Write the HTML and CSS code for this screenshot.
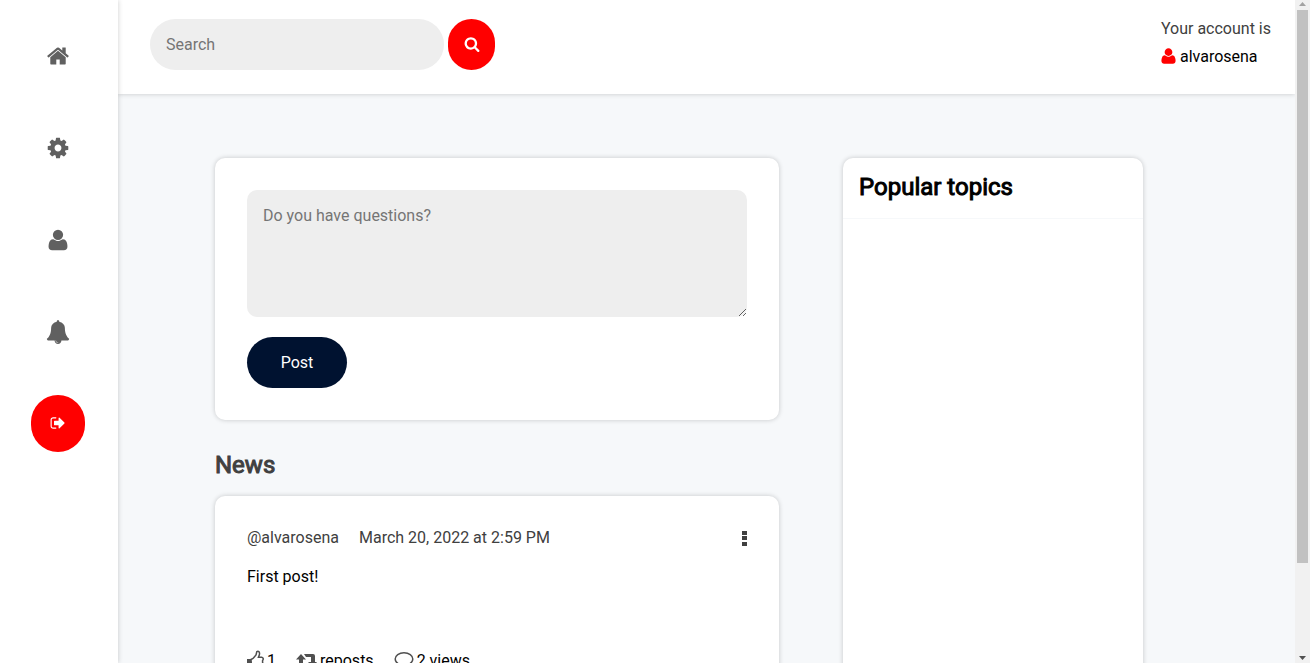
FILE: index.html
```html
<!DOCTYPE html>
<html lang="en">
<head>
<meta charset="utf-8">
<title>Home</title>
<meta name="viewport" content="width=device-width, initial-scale=1">
<link rel="stylesheet" href="styles.css">
</head>
<body>
<div class="app">
  <nav class="sidebar" aria-label="Main">
    <a class="nav-link" href="#" aria-label="Home"><svg class="icon-lg" viewBox="0 0 1792 1792"><path d="M1472 992v480q0 26-19 45t-45 19h-384v-384h-256v384h-384q-26 0-45-19t-19-45v-480q0-1 .5-3t.5-3l575-474 575 474q1 2 1 6zm223-69l-62 74q-8 9-21 11h-3q-13 0-21-7l-692-577-692 577q-12 8-24 7-13-2-21-11l-62-74q-8-10-7-23.500t11-21.500l719-599q32-26 76-26t76 26l244 204v-195q0-14 9-23t23-9h192q14 0 23 9t9 23v408l219 182q10 8 11 21.500t-7 23.500z"/></svg></a>
    <a class="nav-link" href="#" aria-label="Settings"><svg class="icon-lg" viewBox="0 0 1792 1792"><path d="M1152 896q0-106-75-181t-181-75-181 75-75 181 75 181 181 75 181-75 75-181zm512-109v222q0 12-8 23t-20 13l-185 28q-19 54-39 91 35 50 107 138 10 12 10 25t-9 23q-27 37-99 108t-94 71q-12 0-26-9l-138-108q-44 23-91 38-16 136-29 186-7 28-36 28h-222q-14 0-24.500-8.500t-11.500-21.500l-28-184q-49-16-90-37l-141 107q-10 9-25 9-14 0-25-11-126-114-165-168-7-10-7-23 0-12 8-23 15-21 51-66.500t54-70.500q-27-50-41-99l-183-27q-13-2-21-12.500t-8-23.500v-222q0-12 8-23t19-13l186-28q14-46 39-92-40-57-107-138-10-12-10-24 0-10 9-23 26-36 98.500-107.500t94.500-71.500q13 0 26 10l138 107q44-23 91-38 16-136 29-186 7-28 36-28h222q14 0 24.500 8.500t11.500 21.500l28 184q49 16 90 37l142-107q9-9 24-9 13 0 25 10 129 119 165 170 7 8 7 22 0 12-8 23-15 21-51 66.500t-54 70.500q26 50 41 98l183 28q13 2 21 12.500t8 23.500z"/></svg></a>
    <a class="nav-link" href="#" aria-label="Profile"><svg class="icon-lg" viewBox="0 0 1792 1792"><path d="M1600 1405q0 120-73 189.500t-194 69.500h-874q-121 0-194-69.500t-73-189.500q0-53 3.500-103.500t14-109 26.500-108.500 43-97.500 62-81 85.500-53.500 111.500-20q9 0 42 21.500t74.500 48 108 48 133.500 21.500 133.500-21.500 108-48 74.500-48 42-21.500q61 0 111.500 20t85.500 53.500 62 81 43 97.500 26.500 108.500 14 109 3.500 103.500zm-320-893q0 159-112.500 271.500t-271.500 112.500-271.500-112.500-112.500-271.500 112.500-271.500 271.500-112.500 271.500 112.500 112.500 271.500z"/></svg></a>
    <a class="nav-link" href="#" aria-label="Notifications"><svg class="icon-lg" viewBox="0 0 1792 1792"><path d="M912 1696q0-16-16-16-59 0-101.500-42.500t-42.500-101.500q0-16-16-16t-16 16q0 73 51.500 124.500t124.500 51.500q16 0 16-16zm816-288q0 52-38 90t-90 38h-448q0 106-75 181t-181 75-181-75-75-181h-448q-52 0-90-38t-38-90q50-42 91-88t85-119.500 74.500-158.500 50-206 19.500-260q0-152 117-282.500t307-158.500q-8-19-8-39 0-40 28-68t68-28 68 28 28 68q0 20-8 39 190 28 307 158.500t117 282.500q0 139 19.500 260t50 206 74.500 158.500 85 119.500 91 88z"/></svg></a>
    <button class="logout" type="button" aria-label="Log out"><svg class="icon" viewBox="0 0 1792 1792"><path d="M704 1440q0 4 1 20t.5 26.500-3 23.500-10 19.500-20.500 6.500h-320q-119 0-203.500-84.500t-84.500-203.500v-704q0-119 84.500-203.500t203.500-84.500h320q13 0 22.500 9.500t9.500 22.500q0 4 1 20t.5 26.500-3 23.500-10 19.500-20.500 6.500h-320q-66 0-113 47t-47 113v704q0 66 47 113t113 47h312l11.500 1 11.500 3 8 5.500 7 9 2 13.500zm928-544q0 26-19 45l-544 544q-19 19-45 19t-45-19-19-45v-288h-448q-26 0-45-19t-19-45v-384q0-26 19-45t45-19h448v-288q0-26 19-45t45-19 45 19l544 544q19 19 19 45z"/></svg></button>
  </nav>

  <div class="page">
    <header class="topbar">
      <form class="search" role="search">
        <input class="search-input" type="search" placeholder="Search" aria-label="Search">
        <button class="search-button" type="button" aria-label="Search"><svg class="icon" viewBox="0 0 1792 1792"><path d="M1216 832q0-185-131.500-316.500t-316.500-131.500-316.500 131.500-131.500 316.500 131.500 316.500 316.500 131.500 316.500-131.500 131.500-316.500zm512 832q0 52-38 90t-90 38q-54 0-90-38l-343-342q-179 124-399 124-143 0-273.500-55.500t-225-150-150-225-55.500-273.500 55.500-273.500 150-225 225-150 273.500-55.500 273.500 55.500 225 150 150 225 55.500 273.500q0 220-124 399l343 343q37 37 37 90z"/></svg></button>
      </form>
      <div class="account">
        <span class="muted">Your account is</span>
        <a class="account-name" href="#"><svg class="icon-user" viewBox="192 0 1408 1792"><path d="M1600 1405q0 120-73 189.500t-194 69.500h-874q-121 0-194-69.500t-73-189.500q0-53 3.500-103.500t14-109 26.500-108.500 43-97.500 62-81 85.500-53.500 111.500-20q9 0 42 21.500t74.500 48 108 48 133.500 21.500 133.500-21.500 108-48 74.500-48 42-21.500q61 0 111.500 20t85.500 53.500 62 81 43 97.500 26.500 108.500 14 109 3.500 103.500zm-320-893q0 159-112.500 271.500t-271.500 112.500-271.500-112.500-112.500-271.500 112.500-271.500 271.500-112.500 271.500 112.500 112.500 271.500z"/></svg>alvarosena</a>
      </div>
    </header>

    <main class="content">
      <div class="feed">
        <form class="card composer">
          <textarea class="question" placeholder="Do you have questions?" aria-label="Question"></textarea>
          <button class="post-button" type="button">Post</button>
        </form>
        <h2 class="heading muted">News</h2>
        <article class="card post">
          <div class="post-head muted">
            <span>@alvarosena</span>
            <time datetime="2022-03-20T14:59">March 20, 2022 at 2:59 PM</time>
            <button class="menu-button" type="button" aria-label="Post options"><svg class="dots" viewBox="0 0 5 16"><path d="M0 0h5v4h-5zM0 5h5v4h-5zM0 11h5v4h-5z"/></svg></button>
          </div>
          <p class="post-text">First post!</p>
          <div class="post-stats">
            <button class="stat" type="button"><svg class="stat-icon like" viewBox="0 0 17 20"><path class="solid" d="M0 9h4v9h-4z"/><path class="line" d="M4 9.500l2-1 3-3.500.8-3.300q1.200-.8 2.300.2.800 1.300.2 3l-.9 2.400h3.300q1.500.2 1.600 1.800l-.8 1.800.2 1.700-.8 1.500-.1 1.700-1 1.500h-4.800l-4.500-1.400z"/></svg>1</button>
            <button class="stat" type="button"><svg class="stat-icon repost" viewBox="0 0 21 20"><path class="solid" d="M5 4l5 5.500h-3v5.500h6l2 3h-10.500q-1.500 0-1.500-1.500v-7h-3zM8 4h9q2 0 2 2v6h2l-4 5-5-5h3v-5h-5z"/></svg>reposts</button>
            <span class="stat"><svg class="stat-icon comment" viewBox="0 0 20 20"><path class="line" d="M10 2.700c5 0 8.800 2.900 8.800 6.300s-3.800 6.300-8.800 6.300l-2-.2q-1.800 1.900-4.500 2.300 1.300-1.300 1.500-3.300c-2.200-1-3.800-3-3.800-5.100 0-3.400 3.800-6.300 8.800-6.300z"/></svg>2 views</span>
          </div>
        </article>
      </div>
      <aside class="card topics">
        <h2 class="heading topics-title">Popular topics</h2>
      </aside>
    </main>
  </div>

  <div class="scrollbar" aria-hidden="true">
    <svg class="scroll-arrow up" viewBox="0 0 15 10"><path d="M4 6h7l-3.500-4z"/></svg>
    <div class="scroll-track"><div class="scroll-thumb"></div></div>
    <svg class="scroll-arrow" viewBox="0 0 15 10"><path d="M4 3h7l-3.500 4z"/></svg>
  </div>
</div>
</body>
</html>
```
FILE: styles.css
```css
* {
  box-sizing: border-box;
}

body {
  margin: 0;
  background: #f6f8fa;
  color: #000;
  font: 16px/19px Roboto, "Liberation Sans", sans-serif;
}

button, input, textarea {
  border: 0;
  font: inherit;
}

button {
  cursor: pointer;
}

a {
  color: inherit;
  text-decoration: none;
}

svg {
  display: block;
  fill: currentColor;
}

.muted {
  color: #404040;
}

.app {
  display: flex;
  height: 100vh;
  overflow: hidden;
}

.sidebar {
  z-index: 1;
  flex: 0 0 118px;
  display: flex;
  flex-direction: column;
  align-items: center;
  padding: 10px 2px 0 0;
  background: #fff;
  box-shadow: 0 0 5px rgba(0, 0, 0, 0.2);
  color: #606060;
}

.nav-link {
  padding: 34px 16px;
}

.icon-lg {
  width: 24px;
  height: 24px;
}

.icon {
  width: 16px;
  height: 16px;
}

.logout {
  display: grid;
  place-items: center;
  width: 54px;
  height: 57px;
  margin-top: 17px;
  padding: 0 0 1px;
  border-radius: 30px;
  background: #f00;
  color: #fff;
}

.page {
  flex: 1;
  min-width: 0;
}

.topbar {
  display: flex;
  justify-content: space-between;
  height: 94px;
  padding: 19px 24px 0 32px;
  background: #fff;
  box-shadow: 0 0 5px rgba(0, 0, 0, 0.2);
}

.search {
  display: flex;
  gap: 4px;
  height: 51px;
}

.search-input {
  width: 294px;
  padding: 16px;
  border-radius: 30px;
  background: #eee;
  appearance: none;
}

.search-button {
  display: grid;
  place-items: center;
  width: 47px;
  padding: 0 0 1px;
  border-radius: 30px;
  background: #f00;
  color: #fff;
}

.account {
  display: flex;
  flex-direction: column;
  gap: 9px;
}

.account-name {
  display: flex;
  align-items: flex-start;
  gap: 4px;
}

.icon-user {
  width: 15px;
  height: 18px;
  color: #f00;
}

.content {
  display: flex;
  align-items: flex-start;
  gap: 64px;
  padding: 64px 152px 0 97px;
}

.feed {
  flex: 1;
  min-width: 0;
}

.card {
  border-radius: 10px;
  background: #fff;
  box-shadow: 0 0 5px rgba(0, 0, 0, 0.2);
}

.composer {
  padding: 32px;
}

.question {
  display: block;
  width: 100%;
  height: 127px;
  padding: 16px;
  border-radius: 10px;
  background: #eee;
}

.post-button {
  display: block;
  width: 100px;
  height: 51px;
  margin-top: 20px;
  border-radius: 30px;
  background: #001230;
  color: #fff;
}

.heading {
  margin: 0;
  font-size: 24px;
  line-height: 26px;
  font-weight: 400;
  -webkit-text-stroke: 1px;
}

.feed .heading {
  margin: 32px 0 18px;
}

.post {
  padding: 32px;
}

.post-head {
  display: flex;
  gap: 20px;
}

.menu-button {
  margin-left: auto;
  padding: 3px 0 0;
  background: none;
  color: #404040;
}

.dots {
  width: 5px;
  height: 16px;
}

.post-text {
  margin: 20px 0 64px;
}

.post-stats {
  display: flex;
  gap: 20px;
}

.stat {
  display: flex;
  align-items: center;
  gap: 3px;
  padding: 0;
  background: none;
  color: #000;
}

.stat-icon {
  height: 20px;
  color: #505050;
}

.like {
  width: 17px;
}

.repost {
  width: 21px;
}

.comment {
  width: 20px;
}

.line {
  fill: none;
  stroke: currentColor;
  stroke-width: 1.5;
}

.topics {
  flex: 0 0 300px;
  height: 600px;
}

.topics-title {
  padding: 16px 16px 18px;
  border-bottom: 1px solid #f6f8fa;
}

.scrollbar {
  flex: 0 0 15px;
  display: flex;
  flex-direction: column;
  background: #f1f1f1;
  color: #505050;
}

.scroll-arrow {
  width: 15px;
  height: 10px;
}

.up {
  color: #a3a3a3;
}

.scroll-track {
  flex: 1;
  padding: 0 2px;
}

.scroll-thumb {
  height: 86%;
  background: #c1c1c1;
}
```
